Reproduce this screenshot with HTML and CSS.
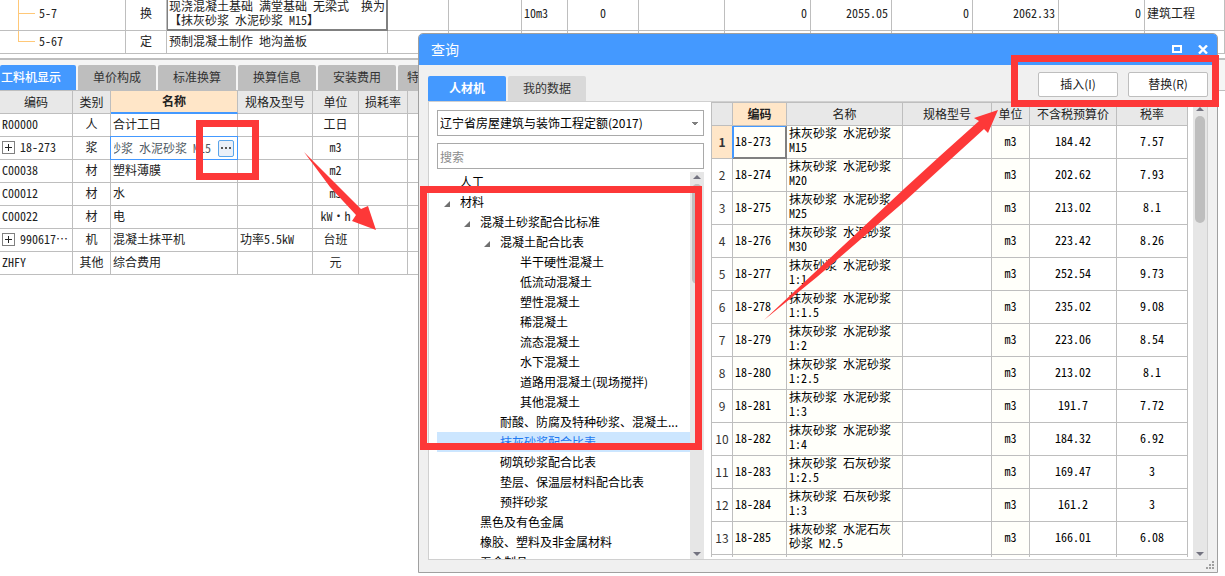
FILE: index.html
```
<!DOCTYPE html>
<html lang="zh-CN">
<head>
<meta charset="utf-8">
<title>查询</title>
<link rel="stylesheet" href="styles.css">
</head>
<body>
<main class="app">
  <table class="grid quota-grid">
    <colgroup><col class="w126"><col class="w41"><col class="w221"><col class="w61"><col class="w73"><col class="w46"><col class="w71"><col class="w86"><col class="w86"><col class="w81"><col class="w81"><col class="w86"><col class="w86"><col></colgroup>
    <tbody>
      <tr class="tall"><td class="branch">5-7</td><td class="center">换</td><td class="picked"><div class="lines">现浇混凝土基础 满堂基础 无梁式&nbsp; 换为<br>【抹灰砂浆 水泥砂浆 M15】</div></td><td></td><td></td><td>10m3</td><td class="center">0</td><td></td><td class="right">0</td><td class="right">2055.05</td><td class="right">0</td><td class="right">2062.33</td><td class="right">0</td><td>建筑工程</td></tr>
      <tr><td class="branch last">5-67</td><td class="center">定</td><td>预制混凝土制作 地沟盖板</td><td></td><td></td><td></td><td></td><td></td><td></td><td></td><td></td><td></td><td></td><td></td></tr>
    </tbody>
  </table>
  <div class="splitter"></div>
  <nav class="tabs">
    <button class="tab active">工料机显示</button>
    <button class="tab">单价构成</button>
    <button class="tab">标准换算</button>
    <button class="tab">换算信息</button>
    <button class="tab">安装费用</button>
    <button class="tab">特征及内容</button>
  </nav>
  <section class="detail">
    <table class="grid resource-grid">
      <colgroup><col class="w73"><col class="w38"><col class="w127"><col class="w75"><col class="w46"><col class="w49"><col></colgroup>
      <thead><tr><th>编码</th><th>类别</th><th class="current">名称</th><th>规格及型号</th><th>单位</th><th>损耗率</th><th></th></tr></thead>
      <tbody>
        <tr><td>R00000</td><td class="center">人</td><td>合计工日</td><td></td><td class="center">工日</td><td></td><td></td></tr>
        <tr><td><div class="node"><button class="expand" aria-label="展开"></button>18-273</div></td><td class="center">浆</td><td class="editing"><div class="editor"><input aria-label="名称" value="砂浆 水泥砂浆 M15"><button class="more" aria-label="更多"><i></i><i></i><i></i></button></div></td><td></td><td class="center">m3</td><td></td><td></td></tr>
        <tr><td>C00038</td><td class="center">材</td><td>塑料薄膜</td><td></td><td class="center">m2</td><td></td><td></td></tr>
        <tr><td>C00012</td><td class="center">材</td><td>水</td><td></td><td class="center">m3</td><td></td><td></td></tr>
        <tr><td>C00022</td><td class="center">材</td><td>电</td><td></td><td class="center">kW·h</td><td></td><td></td></tr>
        <tr><td><div class="node"><button class="expand" aria-label="展开"></button>990617⋯</div></td><td class="center">机</td><td>混凝土抹平机</td><td>功率5.5kW</td><td class="center">台班</td><td></td><td></td></tr>
        <tr><td>ZHFY</td><td class="center">其他</td><td>综合费用</td><td></td><td class="center">元</td><td></td><td></td></tr>
      </tbody>
    </table>
  </section>
</main>

<section class="window" role="dialog" aria-label="查询">
  <header class="titlebar">
    <h1>查询</h1>
    <button aria-label="最大化"><svg width="10" height="8"><path d="M1 1H9V7H1Z" fill="none" stroke="#fff" stroke-width="2"/></svg></button>
    <button aria-label="关闭"><svg width="10" height="9"><path d="M1 .5 9 8.500M9 .5 1 8.500" stroke="#fff" stroke-width="2.400"/></svg></button>
  </header>
  <div class="toolbar">
    <button class="tab active">人材机</button>
    <button class="tab">我的数据</button>
    <div class="actions"><button>插入(I)</button><button>替换(R)</button></div>
  </div>
  <div class="content">
    <aside class="side">
      <select aria-label="定额"><option>辽宁省房屋建筑与装饰工程定额(2017)</option></select>
      <input class="search" type="text" placeholder="搜索" aria-label="搜索">
      <div class="tree">
        <ul>
          <li>人工</li>
          <li class="open">材料</li>
          <li class="l2 open">混凝土砂浆配合比标准</li>
          <li class="l3 open">混凝土配合比表</li>
          <li class="l4">半干硬性混凝土</li>
          <li class="l4">低流动混凝土</li>
          <li class="l4">塑性混凝土</li>
          <li class="l4">稀混凝土</li>
          <li class="l4">流态混凝土</li>
          <li class="l4">水下混凝土</li>
          <li class="l4">道路用混凝土(现场搅拌)</li>
          <li class="l4">其他混凝土</li>
          <li class="l3">耐酸、防腐及特种砂浆、混凝土...</li>
          <li class="l3 selected">抹灰砂浆配合比表</li>
          <li class="l3">砌筑砂浆配合比表</li>
          <li class="l3">垫层、保温层材料配合比表</li>
          <li class="l3">预拌砂浆</li>
          <li class="l2">黑色及有色金属</li>
          <li class="l2">橡胶、塑料及非金属材料</li>
          <li class="l2">五金制品</li>
        </ul>
        <div class="scrollbar"><span class="up"></span><span class="thumb"></span><span class="down"></span></div>
      </div>
    </aside>
    <div class="results">
      <div class="table-wrap">
        <table class="grid result-grid">
          <colgroup><col class="w22"><col class="w54"><col class="w116"><col><col class="w38"><col class="w87"><col class="w71"></colgroup>
          <thead><tr><th></th><th class="current">编码</th><th>名称</th><th>规格型号</th><th>单位</th><th>不含税预算价</th><th>税率</th></tr></thead>
          <tbody>
            <tr class="first"><th>1</th><td>18-273</td><td>抹灰砂浆 水泥砂浆 M15</td><td></td><td>m3</td><td>184.42</td><td>7.57</td></tr>
            <tr><th>2</th><td>18-274</td><td>抹灰砂浆 水泥砂浆 M20</td><td></td><td>m3</td><td>202.62</td><td>7.93</td></tr>
            <tr><th>3</th><td>18-275</td><td>抹灰砂浆 水泥砂浆 M25</td><td></td><td>m3</td><td>213.02</td><td>8.1</td></tr>
            <tr><th>4</th><td>18-276</td><td>抹灰砂浆 水泥砂浆 M30</td><td></td><td>m3</td><td>223.42</td><td>8.26</td></tr>
            <tr><th>5</th><td>18-277</td><td>抹灰砂浆 水泥砂浆 1:1</td><td></td><td>m3</td><td>252.54</td><td>9.73</td></tr>
            <tr><th>6</th><td>18-278</td><td>抹灰砂浆 水泥砂浆 1:1.5</td><td></td><td>m3</td><td>235.02</td><td>9.08</td></tr>
            <tr><th>7</th><td>18-279</td><td>抹灰砂浆 水泥砂浆 1:2</td><td></td><td>m3</td><td>223.06</td><td>8.54</td></tr>
            <tr><th>8</th><td>18-280</td><td>抹灰砂浆 水泥砂浆 1:2.5</td><td></td><td>m3</td><td>213.02</td><td>8.1</td></tr>
            <tr><th>9</th><td>18-281</td><td>抹灰砂浆 水泥砂浆 1:3</td><td></td><td>m3</td><td>191.7</td><td>7.72</td></tr>
            <tr><th>10</th><td>18-282</td><td>抹灰砂浆 水泥砂浆 1:4</td><td></td><td>m3</td><td>184.32</td><td>6.92</td></tr>
            <tr><th>11</th><td>18-283</td><td>抹灰砂浆 石灰砂浆 1:2.5</td><td></td><td>m3</td><td>169.47</td><td>3</td></tr>
            <tr><th>12</th><td>18-284</td><td>抹灰砂浆 石灰砂浆 1:3</td><td></td><td>m3</td><td>161.2</td><td>3</td></tr>
            <tr><th>13</th><td>18-285</td><td>抹灰砂浆 水泥石灰砂浆 M2.5</td><td></td><td>m3</td><td>166.01</td><td>6.08</td></tr>
            <tr><th></th><td></td><td></td><td></td><td></td><td></td><td></td></tr>
          </tbody>
        </table>
      </div>
      <div class="scrollbar wide"><span class="up"></span><span class="thumb"></span><span class="down"></span></div>
    </div>
  </div>
  <svg class="grip" width="8" height="8" fill="#a0a0a0"><path d="M6 0h2v2H6zM3 3h2v2H3zM6 3h2v2H6zM0 6h2v2H0zM3 6h2v2H3zM6 6h2v2H6z"/></svg>
</section>

<svg class="marks" width="1225" height="576" aria-hidden="true">
  <g fill="none" stroke="#fd3838" stroke-width="7">
    <path d="M199.500 123.500H255.500V176.500H199.500Z"/>
    <path d="M423.500 189.500H698.500V446.500H423.500Z"/>
    <path d="M1014.500 58.500H1215.500V103.500H1014.500Z"/>
  </g>
  <g fill="#fd3838">
    <path d="M304 152 361 209 368 206 376 230 352 221 356 215 330 187Z"/>
    <path d="M764 320 813 274 905 188 940 156 979 121 974 118 998 110 988 133 984 129 940 169 905 201 817 277Z"/>
  </g>
</svg>
</body>
</html>
```
FILE: styles.css
```
* { box-sizing: border-box; }

body {
  position: relative;
  min-height: 100vh;
  margin: 0;
  overflow: hidden;
  background: #fff;
  color: #222;
  font: 12px/14px "Noto Sans CJK SC", sans-serif;
}

button, input, select {
  margin: 0;
  padding: 0;
  border: 0;
  border-radius: 0;
  background: none;
  color: inherit;
  font: inherit;
}

/* Data grids */
.grid {
  width: 100%;
  table-layout: fixed;
  border-spacing: 0;
  font-family: "Noto Sans Mono CJK SC", "Liberation Mono", monospace;
}
.grid td, .grid th {
  height: 23px;
  padding: 0 2px 2px;
  border-right: 1px solid #bebebe;
  border-bottom: 1px solid #bebebe;
  overflow: hidden;
  font-weight: 400;
  text-align: left;
  white-space: nowrap;
}
.grid thead th { padding: 0 0 1px; background: #e8e8e8; text-align: center; }
.grid thead th.current { background: #ffe6c8; font-weight: 700; }
.grid .center { text-align: center; }
.grid .right { padding-right: 3px; text-align: right; }

.w22 { width: 22px; }
.w38 { width: 38px; }
.w41 { width: 41px; }
.w46 { width: 46px; }
.w49 { width: 49px; }
.w54 { width: 54px; }
.w61 { width: 61px; }
.w71 { width: 71px; }
.w73 { width: 73px; }
.w75 { width: 75px; }
.w81 { width: 81px; }
.w86 { width: 86px; }
.w87 { width: 87px; }
.w116 { width: 116px; }
.w126 { width: 126px; }
.w127 { width: 127px; }
.w221 { width: 221px; }

.quota-grid .tall td { height: 31px; padding-bottom: 4px; }
.quota-grid .tall td.picked {
  padding-bottom: 0;
  border-right: 2px solid #808080;
  border-bottom: 2px solid #808080;
  box-shadow: inset 1px 0 #808080;
}
.picked .lines { margin-top: -3px; }
.quota-grid .branch {
  padding-left: 39px;
  background:
    linear-gradient(#ffc878, #ffc878) 18px 0 / 1px 100% no-repeat,
    linear-gradient(#ffc878, #ffc878) 18px 13px / 17px 1px no-repeat;
}
.quota-grid .branch.last {
  background:
    linear-gradient(#ffc878, #ffc878) 18px 0 / 1px 11px no-repeat,
    linear-gradient(#ffc878, #ffc878) 18px 10px / 17px 1px no-repeat;
}

.splitter { height: 11px; border-top: 4px solid #fff; background: linear-gradient(#bebebe 2px, #f5f5f5 2px); }

/* Tabs */
.tabs {
  display: flex;
  gap: 2px;
  border-bottom: 1px solid #bebebe;
  background: #f5f5f5;
}
.tab {
  flex: none;
  width: 78px;
  height: 25px;
  border-radius: 2px 2px 0 0;
  background: #bebebe;
  color: #333;
}
.tab.active { background: #4499ff; color: #fff; font-weight: 700; }
.tabs .tab { padding-bottom: 2px; }
.tabs .tab:first-child { width: 76px; padding-right: 14px; font-weight: 500; }

.detail { display: grid; grid-template-columns: 419px 1fr; }
.resource-grid thead th.current { border-bottom: 2px solid #4499ff; }

.node { display: flex; align-items: center; gap: 5px; }
.expand {
  flex: none;
  width: 13px;
  height: 13px;
  border: 1px solid #808080;
  background:
    linear-gradient(#222, #222) center / 7px 1px no-repeat,
    linear-gradient(#222, #222) center / 1px 7px no-repeat;
}
.grid td.editing { padding: 0; overflow: visible; }
.editor {
  display: flex;
  align-items: center;
  height: 24px;
  margin: -1px;
  padding: 0 3px;
  border: 1px solid #4499ff;
}
.editor input { flex: 1; min-width: 0; color: #505a64; direction: rtl; }
.more {
  display: flex;
  justify-content: center;
  align-items: center;
  gap: 2px;
  width: 16px;
  height: 17px;
  margin-left: 7px;
  border: 1px solid #5aa5eb;
  border-radius: 2px;
  background: #ebf0f8;
}
.more i { width: 2px; height: 2px; background: #555; }

/* Query window */
.window {
  position: absolute;
  top: 33px;
  right: 7px;
  bottom: 3px;
  left: 418px;
  display: flex;
  flex-direction: column;
  padding-bottom: 12px;
  border: 1px solid #a0a0a0;
  border-radius: 5px 5px 0 0;
  background: #f0f0f0;
}
.titlebar {
  display: flex;
  align-items: center;
  gap: 16px;
  height: 31px;
  padding: 0 9px 1px 12px;
  border-radius: 4px 4px 0 0;
  background: #4499ff;
  color: #fff;
}
.titlebar h1 { flex: 1; margin: 0; font-size: 14px; font-weight: 400; }
.titlebar svg { display: block; }
.toolbar {
  display: flex;
  align-items: flex-end;
  gap: 2px;
  height: 36px;
  padding: 0 9px;
}
.toolbar .tab:not(.active) { background: #d9d9d9; }
.toolbar button { padding-bottom: 1px; }
.actions { display: flex; gap: 10px; margin-left: auto; padding-bottom: 4px; }
.actions button {
  width: 80px;
  height: 25px;
  border: 1px solid #bebebe;
  border-radius: 2px;
  background: #fff;
}
.content {
  flex: 1;
  display: flex;
  min-height: 0;
  margin: 0 9px;
  border: 1px solid #d0d0d0;
  background: #fff;
}
.side {
  flex: none;
  display: flex;
  flex-direction: column;
  width: 282px;
  padding: 8px 7px 0 8px;
  color: #000;
}
.side select, .search {
  flex: none;
  width: 100%;
  height: 26px;
  margin-bottom: 7px;
  padding: 0 2px;
  border: 1px solid #a9a9a9;
}
.side select {
  appearance: none;
  background:
    linear-gradient(#808080, #808080) right 5px top 11px / 6px 1px no-repeat,
    linear-gradient(#808080, #808080) right 6px top 12px / 4px 1px no-repeat,
    linear-gradient(#808080, #808080) right 7px top 13px / 2px 1px no-repeat;
}
.search { margin-bottom: 3px; }
.search::placeholder { color: #8c8c8c; }

.tree { flex: 1; display: flex; min-height: 0; overflow: hidden; }
.tree ul { flex: 1; margin: 0; padding: 0; list-style: none; }
.tree li { padding-left: 23px; line-height: 20px; white-space: nowrap; }
.tree .l2 { padding-left: 43px; }
.tree .l3 { padding-left: 63px; }
.tree .l4 { padding-left: 83px; }
.tree .selected { background: #cce6ff; color: #1e78f0; }
.tree .open::before {
  content: "";
  display: inline-block;
  margin: 0 10px 0 -16px;
  border-bottom: 6px solid #707070;
  border-left: 6px solid transparent;
}

.scrollbar {
  flex: none;
  display: flex;
  flex-direction: column;
  align-items: center;
  width: 14px;
  padding: 3px 0;
  background: #e6e6e6;
}
.scrollbar .up { border: 4px solid transparent; border-top: 0; border-bottom-color: #737380; }
.scrollbar .down { margin-top: auto; border: 4px solid transparent; border-bottom: 0; border-top-color: #737380; }
.scrollbar .thumb { width: 10px; height: 100px; margin-top: 5px; border-radius: 5px; background: #bebebe; }
.scrollbar.wide .thumb { height: 107px; }
.scrollbar.wide .up { margin-top: 2px; }

.results { flex: 1; display: flex; gap: 5px; min-width: 0; color: #000; }
.table-wrap { flex: 1; min-width: 0; margin-bottom: 2px; overflow: hidden; }
.result-grid thead th { height: 24px; border-top: 1px solid #bebebe; color: #222; }
.result-grid tr > :first-child { border-left: 1px solid #bebebe; }
.result-grid tbody td { height: 33px; background: #fff; text-align: center; white-space: normal; }
.result-grid tbody td:nth-child(-n+3) { text-align: left; }
.result-grid tbody td:nth-child(3) { padding-bottom: 4px; }
.result-grid tbody td:nth-child(2),
.result-grid tbody td:nth-child(3),
.result-grid tbody td:nth-child(5) { background: #fffffa; }
.result-grid tbody th {
  padding: 0;
  color: #333;
  font-family: "Noto Sans CJK SC", sans-serif;
  text-align: center;
}
.result-grid .first th { background: #ffe6c8; border-right-color: #4499ff; font-weight: 700; }
.result-grid .first td:nth-child(2) {
  border-right-color: #808080;
  border-bottom-color: #808080;
  box-shadow: inset 0 1px #4499ff, inset 1px 0 #4499ff, inset -1px -1px #808080;
}

.grip { position: absolute; right: 3px; bottom: 3px; }
.marks { position: absolute; top: 0; left: 0; pointer-events: none; }
```
